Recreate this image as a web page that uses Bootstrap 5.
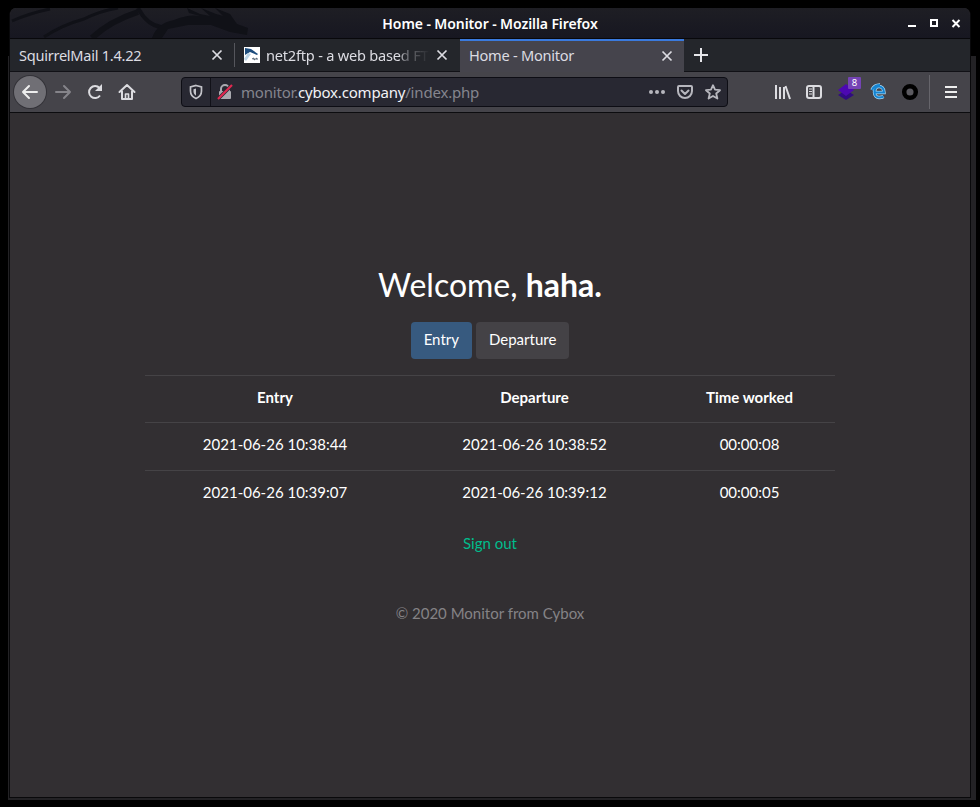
<!DOCTYPE html>
<html lang="en">
<head>
<meta charset="utf-8">
<title>Home - Monitor</title>
<link href="https://cdn.jsdelivr.net/npm/bootstrap@5.3.0/dist/css/bootstrap.min.css" rel="stylesheet">
<style>
body{background:#000;height:807px;overflow:hidden;font-family:"Noto Sans",sans-serif}
svg{display:block;flex:none}
.backing{position:absolute;left:8px;top:56px;width:968px;height:744px;background:#232225}
.window{position:relative;margin:8px 0 0 9px;width:962px;height:790px;border-radius:7px 7px 0 0;border:1px solid #09090b;border-top:0;background:#322f32;overflow:hidden}
.titlebar{height:30px;background:linear-gradient(#1e1e24,#171721);position:relative}
.dragon{position:absolute;left:0;top:0}
.title-text{position:relative;font-size:14px;font-weight:600;color:#fff;letter-spacing:-.09px}
.win-buttons{position:absolute;right:9px;top:10px}
.tabs{height:34px;background:#24262b;border-top:1px solid #08080b;border-bottom:1px solid #111116;font-size:14.6px;letter-spacing:-.27px;color:#dcdce2}
.tab{width:224px;padding:1px 11px 0 9px}
.tab-wide{width:225px;padding-right:12px}
.tab-active{background:#45444c;border-top:2px solid #3a7ade;height:33px;padding:0 11px 1px 9px;margin-bottom:-1px}
.tab-label{white-space:nowrap}
.fade-label{width:170px;padding-left:6px;-webkit-mask-image:linear-gradient(90deg,#000 82%,#0007 85%,transparent 100%)}
.tab-wide .tab-label{letter-spacing:-.22px}
.tab-wide .close-icon{margin-left:auto}
.divider-line{width:1px;height:24px;background:#55565c}
.toolbar{height:41px;background:#45444a;border-bottom:1px solid #0c0c0f;color:#dcdce0;position:relative}
.back{width:32px;height:32px;border-radius:50%;background:#706f75;box-shadow:0 0 0 1px #333238;margin-left:4px}
.url{margin-left:45px;width:547px;height:30px;background:#282832;border:1px solid #0d0d14;border-radius:4px;color:#85858e;font-size:15px;letter-spacing:-.19px}
.url b{font-weight:400;color:#f2f2f6}
.ext-count{position:absolute;left:838px;top:5px;width:13px;height:12px;background:#7544b5;border-radius:1px;color:#fff;font-size:9.5px;line-height:12px;text-align:center}
.page{padding-top:150px;color:#fff;font-family:Lato,sans-serif;font-size:15px;line-height:22.5px}
.page h1{font-size:32px;line-height:44px;margin:0 0 15px;font-weight:400}
.page h1 b{font-weight:700}
.page .btn{font-family:Lato,sans-serif;font-size:15px;line-height:22.5px;color:#fff;border:1px solid transparent;border-radius:4px;padding:5px 12px 7.5px;height:37px}
.btn-entry{background:#375a7f!important}
.btn-depart{background:#444246!important}
.times{width:690px;table-layout:fixed}
.times td,.times th{padding:10px 0 13.9px;border-top:1px solid #454346}
.times th{font-weight:700}
.signout{color:#00bc8c;margin-top:14.5px}
.copyright{color:#858386}
</style>
</head>
<body>
<div class="backing"></div>
<main class="window">
  <header class="titlebar d-flex align-items-center justify-content-center">
    <svg class="dragon" width="250" height="30" fill="none" stroke="#101117" stroke-width="4"><path d="M2 13Q20 5 40 1M34 29Q52 17 74 11Q90 3 108 0" stroke-width="3"/><path d="M82 30Q100 13 128 4" stroke-width="6"/><path d="M128 0Q137 17 151 19" stroke-width="4"/><path d="M142 30Q147 15 164 12Q178 6 190 8L179 5 177 0 190 6 200 8 191 0 206 6 213 8 205 0 220 6 227 16 238 20 237 27 220 24 201 17 178 17 158 21 152 30Z" fill="#101117" stroke="none"/></svg>
    <span class="title-text">Home - Monitor - Mozilla Firefox</span>
    <svg class="win-buttons" width="54" height="12" fill="none" stroke="#fff" stroke-width="2"><path d="M1 8h8M45.500 2l7 7M52.500 2l-7 7"/><rect x="24" y="2" width="6" height="6"/></svg>
  </header>
  <nav class="tabs d-flex align-items-center">
    <div class="tab d-flex align-items-center justify-content-between"><span class="tab-label">SquirrelMail 1.4.22</span><svg width="12" height="12" stroke="#dcdce2" stroke-width="1.7"><path d="M1.5 1.5l9 9M10.500 1.5l-9 9"/></svg></div>
    <div class="divider-line"></div>
    <div class="tab tab-wide d-flex align-items-center"><svg width="16" height="16"><path fill="#fff" d="M0 0h16v16H0z"/><path fill="#1d4d7d" d="M1 1l6 1 7 5-1 1-7-3-5 3z"/><path fill="#b9d3e6" d="M0 12l4-6 3 1-5 7z"/><path stroke="#506070" fill="none" d="M8 12l2-1v2l3-2v2"/></svg><span class="tab-label fade-label">net2ftp - a web based FTP</span><svg class="close-icon" width="12" height="12" stroke="#dcdce2" stroke-width="1.7"><path d="M1.500 1.500l9 9M10.500 1.500l-9 9"/></svg></div>
    <div class="tab tab-active d-flex align-items-center justify-content-between"><span class="tab-label">Home - Monitor</span><svg width="12" height="12" stroke="#dcdce2" stroke-width="1.700"><path d="M1.500 1.500l9 9M10.500 1.500l-9 9"/></svg></div>
    <svg style="margin-left:9px" width="16" height="16" stroke="#e6e6ea" stroke-width="2"><path d="M8 1v14M1 8h14"/></svg>
  </nav>
  <div class="toolbar d-flex align-items-center">
    <div class="back d-flex align-items-center justify-content-center"><svg width="18" height="16" fill="none" stroke="#eee" stroke-width="2" stroke-linecap="round" stroke-linejoin="round"><path d="M16 8H2M8 2L2 8l6 6"/></svg></div>
    <svg style="margin-left:8px" width="18" height="16" fill="none" stroke="#85848a" stroke-width="2" stroke-linecap="round" stroke-linejoin="round"><path d="M2 8h14M10 2l6 6-6 6"/></svg>
    <svg style="margin-left:14px" width="18" height="18" fill="none" stroke="#dcdce0" stroke-width="2"><path d="M14 12.500A6 6 0 1 1 13.500 5"/><path d="M16 1v7H9z" fill="#dcdce0" stroke="none"/></svg>
    <svg style="margin-left:14px" width="18" height="18" fill="none" stroke="#dcdce0" stroke-width="2" stroke-linejoin="round" stroke-linecap="round"><path d="M1.500 9L9 2l7.500 7M4 8.500V16h10V8.500"/><path d="M7.500 16v-5h3v5" stroke-width="1.600"/></svg>
    <div class="url d-flex align-items-center">
      <svg style="margin-left:7px" width="14" height="16" fill="none" stroke="#c3c3c9" stroke-width="1.700"><path d="M7 1.500L12.500 3v4c0 4-2.500 6.300-5.500 7.500C4 13.300 1.500 11 1.500 7V3z"/><path d="M7 4.500L4.500 5.200V8q.2 2.500 2.500 3.800z" fill="#c3c3c9" stroke="none"/></svg>
      <div style="margin-left:7px;width:1px;height:28px;background:#111118"></div>
      <svg style="margin-left:6px" width="16" height="16"><path d="M4 8V5a4 4 0 0 1 8 0v3" fill="none" stroke="#aaaab0" stroke-width="2"/><rect x="2" y="7" width="12" height="8" rx="1" fill="#aaaab0"/><path d="M1 15L15 1" stroke="#282832" stroke-width="3.500"/><path d="M1 15L15 1" stroke="#e22850" stroke-width="2.200"/></svg>
      <span style="margin-left:8px">monitor.<b>cybox.company</b>/index.php</span>
      <svg class="ms-auto" width="18" height="6" fill="#b7b7be"><circle cx="3" cy="3" r="2"/><circle cx="9" cy="3" r="2"/><circle cx="15" cy="3" r="2"/></svg>
      <svg style="margin-left:11px" width="16" height="16" fill="none" stroke="#b7b7be" stroke-width="2" stroke-linecap="round" stroke-linejoin="round"><path d="M2 2h12q1 0 1 1v4a7 7 0 0 1-14 0V3q0-1 1-1zM4.500 6.500L8 10l3.500-3.500"/></svg>
      <svg style="margin:0 6px 0 12px" width="16" height="16" fill="none" stroke="#b7b7be" stroke-width="1.800" stroke-linejoin="round"><path d="M8 1.200l2 4.500 5 .5-3.800 3.300 1.200 5L8 12l-4.400 2.500 1.200-5L1 6.200l5-.5z"/></svg>
    </div>
    <svg style="margin-left:46px" width="18" height="16" fill="none" stroke="#dcdce0" stroke-width="2"><path d="M2 1v14M6 3v12M10 3v12M11.500 2L16 15"/></svg>
    <svg style="margin-left:13px" width="18" height="16" fill="none" stroke="#dcdce0" stroke-width="2"><rect x="2" y="2" width="14" height="12" rx="2"/><path d="M8.500 2v12"/><path d="M4 5h3M4 7.500h3M4 10h3" stroke-width="1"/></svg>
    <svg style="margin-left:14px" width="18" height="18"><path d="M9 7l8 5-8 5-8-5z" fill="#300b82"/><path d="M9 1l8 6-8 6-8-6z" fill="#4c08b2"/></svg>
    <span class="ext-count">8</span>
    <svg style="margin-left:15px" width="16" height="18" fill="none"><path d="M4.500 9.500h9.500C14 5 11 3.500 9 3.500 6 3.500 4.500 6 4.500 9.500c0 3.500 2.500 5 4.500 5 2 0 3.500-.4 4.500-1M2 7Q4 2 10 2" stroke="#a9daf7" stroke-width="3.400"/><path d="M4.500 9.500h9.500C14 5 11 3.500 9 3.500 6 3.500 4.500 6 4.500 9.500c0 3.500 2.500 5 4.500 5 2 0 3.500-.4 4.500-1M2 7Q4 2 10 2" stroke="#1684d0" stroke-width="2.100"/><path d="M7 7.500q2-2 4 0z" fill="#45444a"/></svg>
    <svg style="margin-left:15px" width="18" height="18"><circle cx="9" cy="9" r="5.800" fill="#5b5a60" stroke="#000" stroke-width="4.500"/></svg>
    <div style="width:1px;height:34px;background:#66656b;margin-left:10px"></div>
    <svg style="margin-left:15px" width="13" height="14" stroke="#eee" stroke-width="2"><path d="M0 2h12M0 7h12M0 12h12"/></svg>
  </div>
  <section class="page text-center">
    <h1>Welcome, <b>haha.</b></h1>
    <div class="d-flex justify-content-center gap-1"><button class="btn btn-entry">Entry</button><button class="btn btn-depart">Departure</button></div>
    <table class="times mx-auto mt-3">
      <colgroup><col style="width:260px"><col style="width:259px"><col style="width:171px"></colgroup>
      <thead><tr><th>Entry</th><th>Departure</th><th>Time worked</th></tr></thead>
      <tbody><tr><td>2021-06-26 10:38:44</td><td>2021-06-26 10:38:52</td><td>00:00:08</td></tr>
      <tr><td>2021-06-26 10:39:07</td><td>2021-06-26 10:39:12</td><td>00:00:05</td></tr></tbody>
    </table>
    <div class="signout">Sign out</div>
    <div class="copyright mt-5">© 2020 Monitor from Cybox</div>
  </section>
</main>
<script src="https://cdn.jsdelivr.net/npm/bootstrap@5.3.0/dist/js/bootstrap.bundle.min.js"></script>
</body>
</html>
